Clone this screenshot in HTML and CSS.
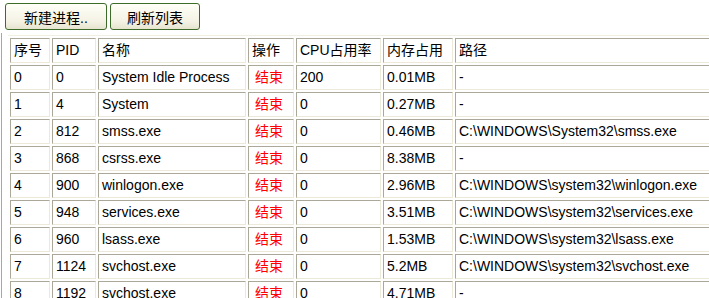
FILE: index.html
```html
<!DOCTYPE html>
<html lang="zh-CN">
<head>
    <meta charset="UTF-8">
    <meta name="viewport" content="width=device-width, initial-scale=1.0">
    <title>进程管理</title>
    <link rel="stylesheet" href="styles.css">
</head>
<body>
    <div class="toolbar">
        <button class="btn btn-new" type="button">新建进程..</button>
        <button class="btn btn-refresh" type="button">刷新列表</button>
    </div>

    <div class="list">
        <table class="proc-table">
            <colgroup>
                <col class="c-no">
                <col class="c-pid">
                <col class="c-name">
                <col class="c-op">
                <col class="c-cpu">
                <col class="c-mem">
                <col class="c-path">
            </colgroup>
            <tr>
                <td>序号</td><td>PID</td><td>名称</td><td>操作</td><td>CPU占用率</td><td>内存占用</td><td>路径</td>
            </tr>
            <tr>
                <td>0</td><td>0</td><td>System Idle Process</td><td class="op"><a href="#">结束</a></td><td>200</td><td>0.01MB</td><td>-</td>
            </tr>
            <tr>
                <td>1</td><td>4</td><td>System</td><td class="op"><a href="#">结束</a></td><td>0</td><td>0.27MB</td><td>-</td>
            </tr>
            <tr>
                <td>2</td><td>812</td><td>smss.exe</td><td class="op"><a href="#">结束</a></td><td>0</td><td>0.46MB</td><td>C:\WINDOWS\System32\smss.exe</td>
            </tr>
            <tr>
                <td>3</td><td>868</td><td>csrss.exe</td><td class="op"><a href="#">结束</a></td><td>0</td><td>8.38MB</td><td>-</td>
            </tr>
            <tr>
                <td>4</td><td>900</td><td>winlogon.exe</td><td class="op"><a href="#">结束</a></td><td>0</td><td>2.96MB</td><td>C:\WINDOWS\system32\winlogon.exe</td>
            </tr>
            <tr>
                <td>5</td><td>948</td><td>services.exe</td><td class="op"><a href="#">结束</a></td><td>0</td><td>3.51MB</td><td>C:\WINDOWS\system32\services.exe</td>
            </tr>
            <tr>
                <td>6</td><td>960</td><td>lsass.exe</td><td class="op"><a href="#">结束</a></td><td>0</td><td>1.53MB</td><td>C:\WINDOWS\system32\lsass.exe</td>
            </tr>
            <tr>
                <td>7</td><td>1124</td><td>svchost.exe</td><td class="op"><a href="#">结束</a></td><td>0</td><td>5.2MB</td><td>C:\WINDOWS\system32\svchost.exe</td>
            </tr>
            <tr>
                <td>8</td><td>1192</td><td>svchost.exe</td><td class="op"><a href="#">结束</a></td><td>0</td><td>4.71MB</td><td>-</td>
            </tr>
        </table>
    </div>
</body>
</html>
```

FILE: styles.css
```css
html, body {
    overflow: hidden;
}
body {
    margin: 0;
    background: #fff;
    color: #000;
    font-family: "Liberation Sans", "Noto Sans CJK SC", sans-serif;
    font-size: 14px;
}
.toolbar {
    display: flex;
    gap: 3px;
    padding: 3px 0 0 5px;
}
.btn {
    height: 27px;
    padding: 0;
    border: 1px solid #3d6b28;
    border-radius: 3px;
    background: linear-gradient(#fffff8, #f4f2e4 70%, #e6e3cf);
    color: #000;
    font-family: inherit;
    font-size: 14px;
    cursor: pointer;
}
.btn-new {
    width: 102px;
}
.btn-refresh {
    width: 90px;
}
.list {
    margin: 3px 0 0 1px;
    padding-top: 2px;
    border-left: 1px solid #aca899;
}
.proc-table {
    margin-left: 6px;
    border-top: 1px solid #f1efe2;
    border-spacing: 2px;
    table-layout: fixed;
    width: 749px;
}
.c-no { width: 40px; }
.c-pid { width: 44px; }
.c-name { width: 148px; }
.c-op { width: 46px; }
.c-cpu { width: 85px; }
.c-mem { width: 70px; }
.c-path { width: 300px; }
.proc-table td {
    box-sizing: border-box;
    height: 25px;
    padding: 0 3px;
    border: 1px solid;
    border-color: #aca899 #ece9d8 #ece9d8 #aca899;
    line-height: 23px;
    white-space: nowrap;
    overflow: hidden;
}
.proc-table td.op {
    padding-left: 6px;
}
.op a {
    color: #f00;
    text-decoration: none;
}
```
